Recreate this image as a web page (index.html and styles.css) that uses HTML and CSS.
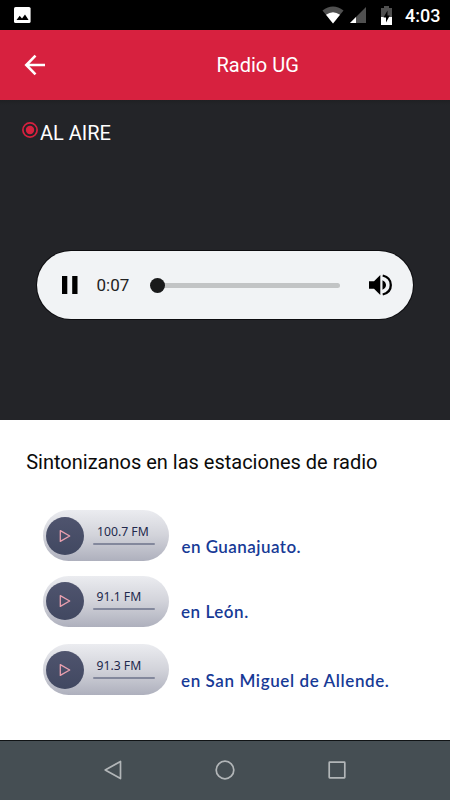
FILE: index.html
```html
<!DOCTYPE html>
<html lang="es">
<head>
<meta charset="utf-8">
<title>Radio UG</title>
<link rel="stylesheet" href="styles.css">
</head>
<body>
<div class="status">
  <svg class="status-photo" width="17" height="16" viewBox="0 0 17 16"><rect width="16.6" height="16" rx="1.6" fill="#fff"/><path d="M2.5 13 5.7 8.8 8 11.4 11 7.5 14.6 13Z" fill="#000"/></svg>
  <svg class="status-wifi" width="22" height="18" viewBox="0 0 22 18"><path d="M.5 4.5Q11-3.500 21.500 4.500L11 17.500Z" fill="#505050"/><path d="M4 8.800Q11 3.500 18 8.800L11 17.500Z" fill="#fff"/></svg>
  <svg class="status-signal" width="16" height="16" viewBox="0 0 16 16"><path d="M0 16 16 0V16Z" fill="#505050"/><path d="M0 16 6 10V16Z" fill="#fff"/></svg>
  <svg class="status-battery" width="11" height="19" viewBox="0 0 11 19"><path d="M3 0H8V2H11V19H0V2H3Z" fill="#505050"/><path d="M0 11H11V19H0Z" fill="#fff"/><path d="M6.500 4.500 2.500 11.500H5V16.500L8.800 9.500H6.500Z" fill="#000"/></svg>
  <span class="clock">4:03</span>
</div>
<header class="appbar">
  <svg class="back" width="22" height="22" viewBox="0 0 22 22" fill="none" stroke="#fff" stroke-width="2.6"><path d="M11.500 1.700 2.300 11 11.500 20.300M2.300 11H21"/></svg>
  <h1>Radio UG</h1>
</header>
<section class="live">
  <div class="onair">
    <svg width="16" height="16" viewBox="0 0 16 16"><circle cx="8" cy="8" r="7.100" fill="none" stroke="#d7213f" stroke-width="1.700"/><circle cx="8" cy="8" r="4.200" fill="#d7213f"/></svg>
    <span>AL AIRE</span>
  </div>
  <div class="player">
    <svg class="pause" width="16" height="18" viewBox="0 0 16 18"><path d="M0 0H5.300V18H0ZM10.200 0H15.500V18H10.200Z"/></svg>
    <span class="time">0:07</span>
    <div class="track"><i class="knob"></i></div>
    <svg class="volume" width="23" height="22" viewBox="0 0 23 22"><path d="M0 7.300H5L11.300 1V21L5 14.700H0Z"/><path d="M13.500 6.200Q17 8 17 11T13.500 15.800Z"/><path d="M13.700 1.500C19 2.800 21.800 6.700 21.800 11S19 19.200 13.700 20.500" fill="none" stroke="#000" stroke-width="2.300"/></svg>
  </div>
</section>
<main class="stations">
  <h2>Sintonizanos en las estaciones de radio</h2>
  <div class="station">
    <div class="pill"><span class="play"><svg width="12" height="14" viewBox="0 0 12 14"><path d="M1.300 1.600V12.400L10.700 7Z"/></svg></span><div class="freq"><span>100.7 FM</span><i></i></div></div>
    <p class="guanajuato">en Guanajuato.</p>
  </div>
  <div class="station second">
    <div class="pill"><span class="play"><svg width="12" height="14" viewBox="0 0 12 14"><path d="M1.300 1.600V12.400L10.700 7Z"/></svg></span><div class="freq"><span>91.1 FM</span><i></i></div></div>
    <p class="leon">en León.</p>
  </div>
  <div class="station third">
    <div class="pill"><span class="play"><svg width="12" height="14" viewBox="0 0 12 14"><path d="M1.300 1.600V12.400L10.700 7Z"/></svg></span><div class="freq"><span>91.3 FM</span><i></i></div></div>
    <p class="allende">en San Miguel de Allende.</p>
  </div>
</main>
<nav class="navbar">
  <svg width="20" height="20" viewBox="0 0 20 20"><path d="M2.200 10 17.500 1.400V18.600Z"/></svg>
  <svg width="20" height="20" viewBox="0 0 20 20"><circle cx="10" cy="10" r="8.800"/></svg>
  <svg width="20" height="20" viewBox="0 0 20 20"><rect x="2.200" y="2.200" width="15.600" height="15.600" rx=".5"/></svg>
</nav>
</body>
</html>
```
FILE: styles.css
```css
* { box-sizing: border-box; }
body { margin: 0; width: 450px; height: 800px; overflow: hidden; background: #fff; font-family: Roboto, sans-serif; }
svg { display: block; flex: none; }
h1, h2, p { margin: 0; font-weight: 400; }

.status { height: 30px; background: #000; display: flex; align-items: flex-start; padding-left: 14px; }
.status-photo { margin-top: 7px; }
.status-wifi { margin: 5.500px 0 0 291px; }
.status-signal { margin: 7px 0 0 6px; }
.status-battery { margin: 6px 0 0 15px; }
.clock { margin: 5px 0 0 13px; color: #fff; font-size: 18px; line-height: 22px; font-weight: 500; white-space: nowrap; }

.appbar { height: 70px; background: #d7213f; display: flex; align-items: center; padding-left: 24px; }
.appbar h1 { margin-left: 170.500px; color: #fff; font-size: 20px; line-height: 24px; white-space: nowrap; }

.live { height: 320px; padding: 21px 37px 0 22px; background: linear-gradient(#1f2023, #232428 5px); }
.onair { display: flex; align-items: flex-start; height: 24px; gap: 2px; color: #fff; font-size: 20px; line-height: 24px; }
.onair svg { margin-top: 1px; }
.player { margin: 106px 0 0 15px; width: 376px; height: 68px; border-radius: 34px; background: #f1f3f5; box-shadow: 0 0 0 1px #0c0c0f; display: flex; align-items: center; padding-left: 25px; }
.time { flex: none; margin-left: 18.500px; width: 36.500px; font-size: 17px; color: #222; }
.track { flex: none; margin-left: 24px; width: 183px; height: 5px; border-radius: 3px; background: #c2c4c5; display: flex; align-items: center; }
.knob { flex: none; width: 15px; height: 15px; margin-left: -7px; border-radius: 50%; background: #191a1b; }
.volume { margin-left: 28.500px; }

.stations { height: 320px; padding-top: 30px; }
.stations h2 { margin-left: 26.200px; font-size: 20px; line-height: 24px; color: #0b0b0b; }
.station { display: flex; margin: 36px 0 0 43px; height: 51px; }
.station.second { margin: 14.500px 0 0 42.500px; }
.station.third { margin: 17.500px 0 0 42.500px; }
.pill { width: 126px; height: 51px; border-radius: 26px; background: linear-gradient(#ebecf0, #d2d3da 50%, #aeb0bd); display: flex; align-items: center; padding-left: 3px; }
.play { width: 38px; height: 38px; border-radius: 50%; background: linear-gradient(#4f546e, #414861); display: flex; align-items: center; justify-content: center; }
.play svg { fill: none; stroke: #e9a0af; stroke-width: 1.300; stroke-linejoin: round; }
.freq { margin-left: 9px; height: 51px; width: 63px; }
.freq span { display: block; margin: 12.500px 0 0 4px; font: 12.200px/18px "Noto Sans", sans-serif; color: #22284c; white-space: nowrap; }
.freq i { display: block; margin-top: 2px; width: 62px; height: 2px; border-radius: 1px; background: #83889c; }
.station p { margin: 25.500px 0 0 12.500px; font: 600 17px/22px Lato, sans-serif; color: #173a96; white-space: nowrap; }
.station .guanajuato { letter-spacing: .45px; }
.station .leon { letter-spacing: .55px; }
.station .allende { letter-spacing: .6px; }

.navbar { height: 60px; background: #454e53; border-top: 1px solid #101315; display: flex; justify-content: space-between; align-items: center; padding: 0 103px 2px; }
.navbar svg { fill: none; stroke: #b2b6b8; stroke-width: 1.700; stroke-linejoin: round; }
```
